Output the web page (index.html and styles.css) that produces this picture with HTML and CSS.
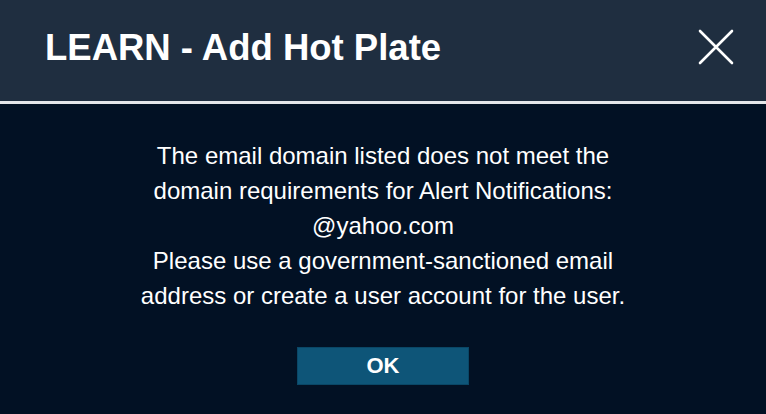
FILE: index.html
```html
<!DOCTYPE html>
<html lang="en">
<head>
    <meta charset="UTF-8">
    <meta name="viewport" content="width=device-width, initial-scale=1.0">
    <title>LEARN - Add Hot Plate</title>
    <link rel="stylesheet" href="styles.css">
</head>
<body>
    <div class="dialog">
        <div class="dialog-header">
            <h1>LEARN - Add Hot Plate</h1>
            <button class="close-btn" aria-label="Close">
                <svg width="36" height="36" viewBox="0 0 36 36">
                    <path d="M2 2 L34 34 M34 2 L2 34" stroke="#fff" stroke-width="2.6" stroke-linecap="round" fill="none"/>
                </svg>
            </button>
        </div>
        <div class="dialog-body">
            <p class="message">
                The email domain listed does not meet the<br>
                domain requirements for Alert Notifications:<br>
                @yahoo.com<br>
                Please use a government-sanctioned email<br>
                address or create a user account for the user.
            </p>
            <button class="ok-btn">OK</button>
        </div>
    </div>
</body>
</html>
```

FILE: styles.css
```css
body {
    margin: 0;
    padding: 0;
    font-family: 'Liberation Sans', Arial, sans-serif;
    background-color: #021124;
    color: #fff;
}
.dialog {
    width: 766px;
    height: 414px;
    display: flex;
    flex-direction: column;
}
.dialog-header {
    height: 104px;
    flex-shrink: 0;
    box-sizing: border-box;
    padding: 26px 32px 0 45px;
    background-color: #1f2e40;
    border-bottom: 3px solid #e4e6e9;
    display: flex;
    justify-content: space-between;
    align-items: flex-start;
}
.dialog-header h1 {
    margin: 0;
    font-size: 36.5px;
    line-height: 44px;
    font-weight: bold;
    color: #fff;
}
.close-btn {
    background: none;
    border: none;
    padding: 0;
    margin-top: 3px;
    cursor: pointer;
}
.close-btn svg {
    display: block;
}
.dialog-body {
    flex: 1;
    display: flex;
    flex-direction: column;
    align-items: center;
    padding-top: 34px;
}
.message {
    margin: 0;
    font-size: 24px;
    line-height: 35px;
    text-align: center;
}
.ok-btn {
    margin-top: 34px;
    width: 172px;
    height: 38px;
    background-color: #0e5578;
    border: 1px solid #0a4766;
    color: #fff;
    font-family: 'Liberation Sans', Arial, sans-serif;
    font-size: 22px;
    font-weight: bold;
    cursor: pointer;
}
```
